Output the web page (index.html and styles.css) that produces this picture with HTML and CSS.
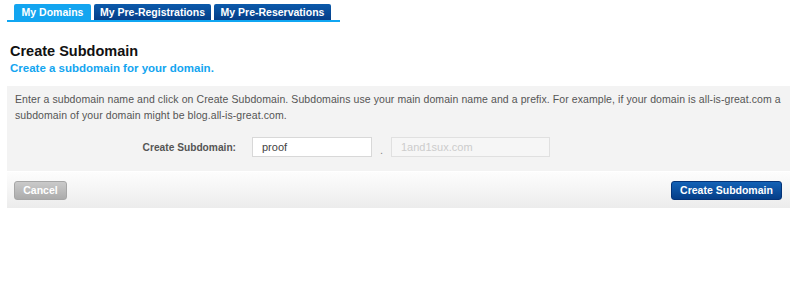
FILE: index.html
```html
<!DOCTYPE html>
<html lang="en">
<head>
    <meta charset="UTF-8">
    <title>Create Subdomain</title>
    <link rel="stylesheet" href="styles.css">
</head>
<body>
    <div class="tabs">
        <a class="tab active" href="#">My Domains</a>
        <a class="tab tab-wide" href="#">My Pre-Registrations</a>
        <a class="tab tab-wide" href="#">My Pre-Reservations</a>
    </div>

    <div class="page-title">
        <h1>Create Subdomain</h1>
        <h2>Create a subdomain for your domain.</h2>
    </div>

    <div class="panel">
        <p class="intro">Enter a subdomain name and click on Create Subdomain. Subdomains use your main domain name and a prefix. For example, if your domain is all-is-great.com a subdomain of your domain might be blog.all-is-great.com.</p>

        <div class="form-row">
            <label for="subdomain">Create Subdomain:</label>
            <input type="text" id="subdomain" value="proof">
            <span class="dot">.</span>
            <input type="text" class="domain" placeholder="1and1sux.com" disabled>
        </div>
    </div>

    <div class="actions">
        <button class="btn btn-cancel">Cancel</button>
        <button class="btn btn-primary">Create Subdomain</button>
    </div>
</body>
</html>
```

FILE: styles.css
```css
* {
    margin: 0;
    padding: 0;
    box-sizing: border-box;
    font-family: 'Liberation Sans', Arial, sans-serif;
}

body {
    background: #fff;
    padding: 4px 10px 0 7px;
    width: 800px;
}

.tabs {
    display: flex;
    gap: 3px;
    padding-left: 7px;
    width: 333px;
    border-bottom: 2px solid #10a6f2;
}

.tab {
    display: block;
    flex: none;
    width: 77px;
    height: 16px;
    line-height: 16px;
    text-align: center;
    white-space: nowrap;
    font-size: 10.5px;
    font-weight: bold;
    color: #fff;
    text-decoration: none;
    background: linear-gradient(#0b5aab, #053e88);
    border-radius: 2px 2px 0 0;
}

.tab-wide {
    width: 117px;
}

.tab.active {
    background: #13a5f0;
}

.page-title {
    padding: 20px 0 0 3px;
}

h1 {
    font-size: 14.5px;
    color: #111;
    line-height: 19px;
}

h2 {
    font-size: 11.5px;
    color: #13a5f0;
    line-height: 14px;
}

.panel {
    margin-top: 11px;
    background: #f3f3f3;
    padding: 5px 8px 14px 8px;
}

.intro {
    font-size: 10.5px;
    letter-spacing: 0.08px;
    line-height: 16px;
    color: #555;
}

.form-row {
    display: flex;
    align-items: center;
    margin-top: 14px;
}

label {
    width: 237px;
    text-align: right;
    padding-right: 16px;
    font-size: 10.2px;
    font-weight: bold;
    color: #555;
}

input {
    height: 20px;
    border: 1px solid #d8d8d8;
    background: #fff;
    padding: 0 9px;
    font-size: 11px;
    color: #444;
}

#subdomain {
    width: 120px;
}

.dot {
    width: 19px;
    text-align: center;
    font-size: 11px;
    color: #888;
    padding-top: 6px;
}

.domain {
    width: 159px;
    background: #f6f6f6;
    border-color: #e0e0e0;
}

.domain::placeholder {
    color: #ccc;
}

.actions {
    display: flex;
    justify-content: space-between;
    align-items: center;
    height: 37px;
    padding: 0 8px 0 7px;
    background: linear-gradient(#fdfdfd, #ececec);
    border-top: 1px solid #fff;
}

.btn {
    height: 19px;
    border-radius: 3px;
    white-space: nowrap;
    font-size: 10.5px;
    font-weight: bold;
    color: #fff;
}

.btn-cancel {
    width: 53px;
    background: linear-gradient(#cacaca, #ababab);
    border: 1px solid #a6a6a6;
}

.btn-primary {
    width: 111px;
    background: linear-gradient(#1362b6, #053e88);
    border: 1px solid #043478;
}
```
